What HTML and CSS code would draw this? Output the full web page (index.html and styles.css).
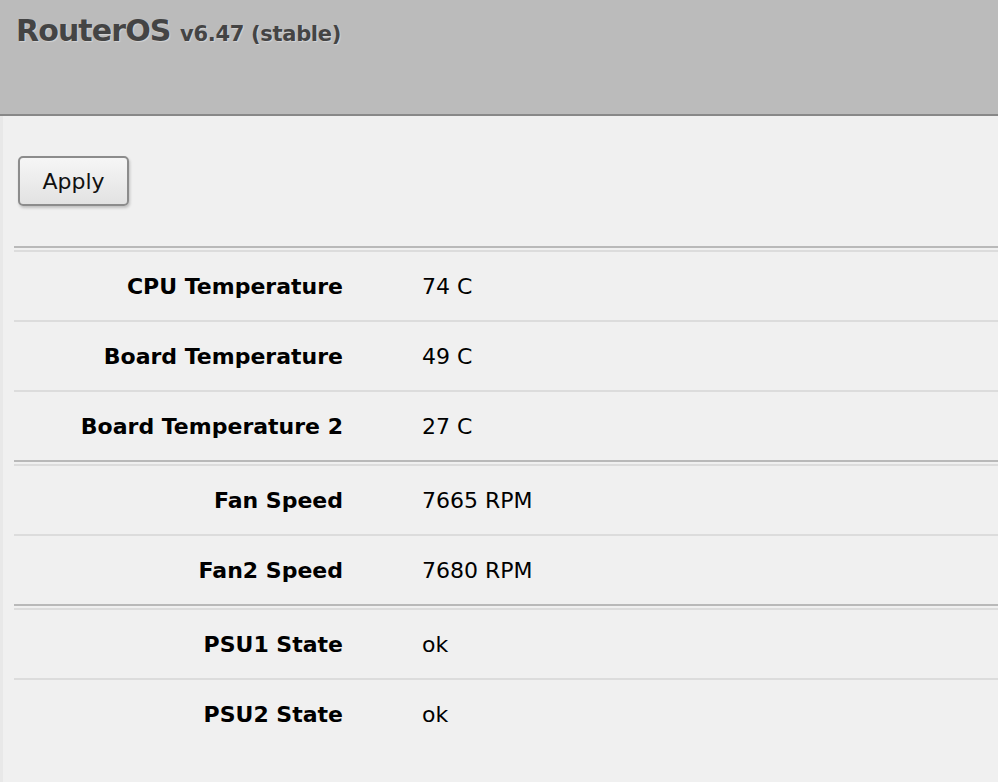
FILE: index.html
```html
<!DOCTYPE html>
<html lang="en">

<head>
  <meta charset="UTF-8">
  <meta name="viewport" content="width=device-width, initial-scale=1.0">
  <title>RouterOS</title>
  <link rel="stylesheet" href="styles.css">
</head>

<body>
  <header class="top">
    <h1 class="brand">RouterOS <span class="version">v6.47 (stable)</span></h1>
  </header>
  <main class="content">
    <div class="toolbar">
      <button class="btn">Apply</button>
    </div>
    <section class="group">
      <div class="row"><span class="label">CPU Temperature</span><span class="value">74 C</span></div>
      <div class="row"><span class="label">Board Temperature</span><span class="value">49 C</span></div>
      <div class="row"><span class="label">Board Temperature 2</span><span class="value">27 C</span></div>
    </section>
    <section class="group">
      <div class="row"><span class="label">Fan Speed</span><span class="value">7665 RPM</span></div>
      <div class="row"><span class="label">Fan2 Speed</span><span class="value">7680 RPM</span></div>
    </section>
    <section class="group">
      <div class="row"><span class="label">PSU1 State</span><span class="value">ok</span></div>
      <div class="row"><span class="label">PSU2 State</span><span class="value">ok</span></div>
    </section>
  </main>
</body>

</html>
```

FILE: styles.css
```css
body {
  margin: 0;
  padding: 0;
  background: #f0f0f0;
  font-family: "DejaVu Sans", Verdana, sans-serif;
  color: #000;
  overflow: hidden;
}

.top {
  background: #bbbbbb;
  border-bottom: 2px solid #888;
  box-sizing: border-box;
  height: 116px;
}

.brand {
  margin: 0;
  padding: 13px 0 0 16px;
  font-size: 30px;
  line-height: 35px;
  font-weight: bold;
  color: #444;
  letter-spacing: -0.9px;
  text-shadow: 1px 1px 1px #d4d4d4;
}

.version {
  font-size: 21px;
  letter-spacing: -0.3px;
}

.content {
  border-left: 3px solid #e8e8e8;
  padding-left: 11px;
  min-height: 666px;
}

.toolbar {
  padding: 40px 0 40px 4px;
}

.btn {
  display: block;
  width: 111px;
  height: 50px;
  margin: 0;
  font-family: "DejaVu Sans", Verdana, sans-serif;
  font-size: 22px;
  color: #111;
  background: linear-gradient(#f6f6f6, #e2e2e2);
  border: 2px solid #8c8c8c;
  border-radius: 5px;
  box-shadow: 1px 2px 3px rgba(0, 0, 0, 0.2);
}

.group {
  border-top: 2px solid #b9b9b9;
  padding-top: 2px;
}

.row {
  display: flex;
  align-items: center;
  height: 68px;
  border-top: 2px solid #dcdcdc;
  font-size: 22px;
}

.label {
  width: 329px;
  text-align: right;
  font-weight: bold;
}

.value {
  margin-left: 79px;
}
```
